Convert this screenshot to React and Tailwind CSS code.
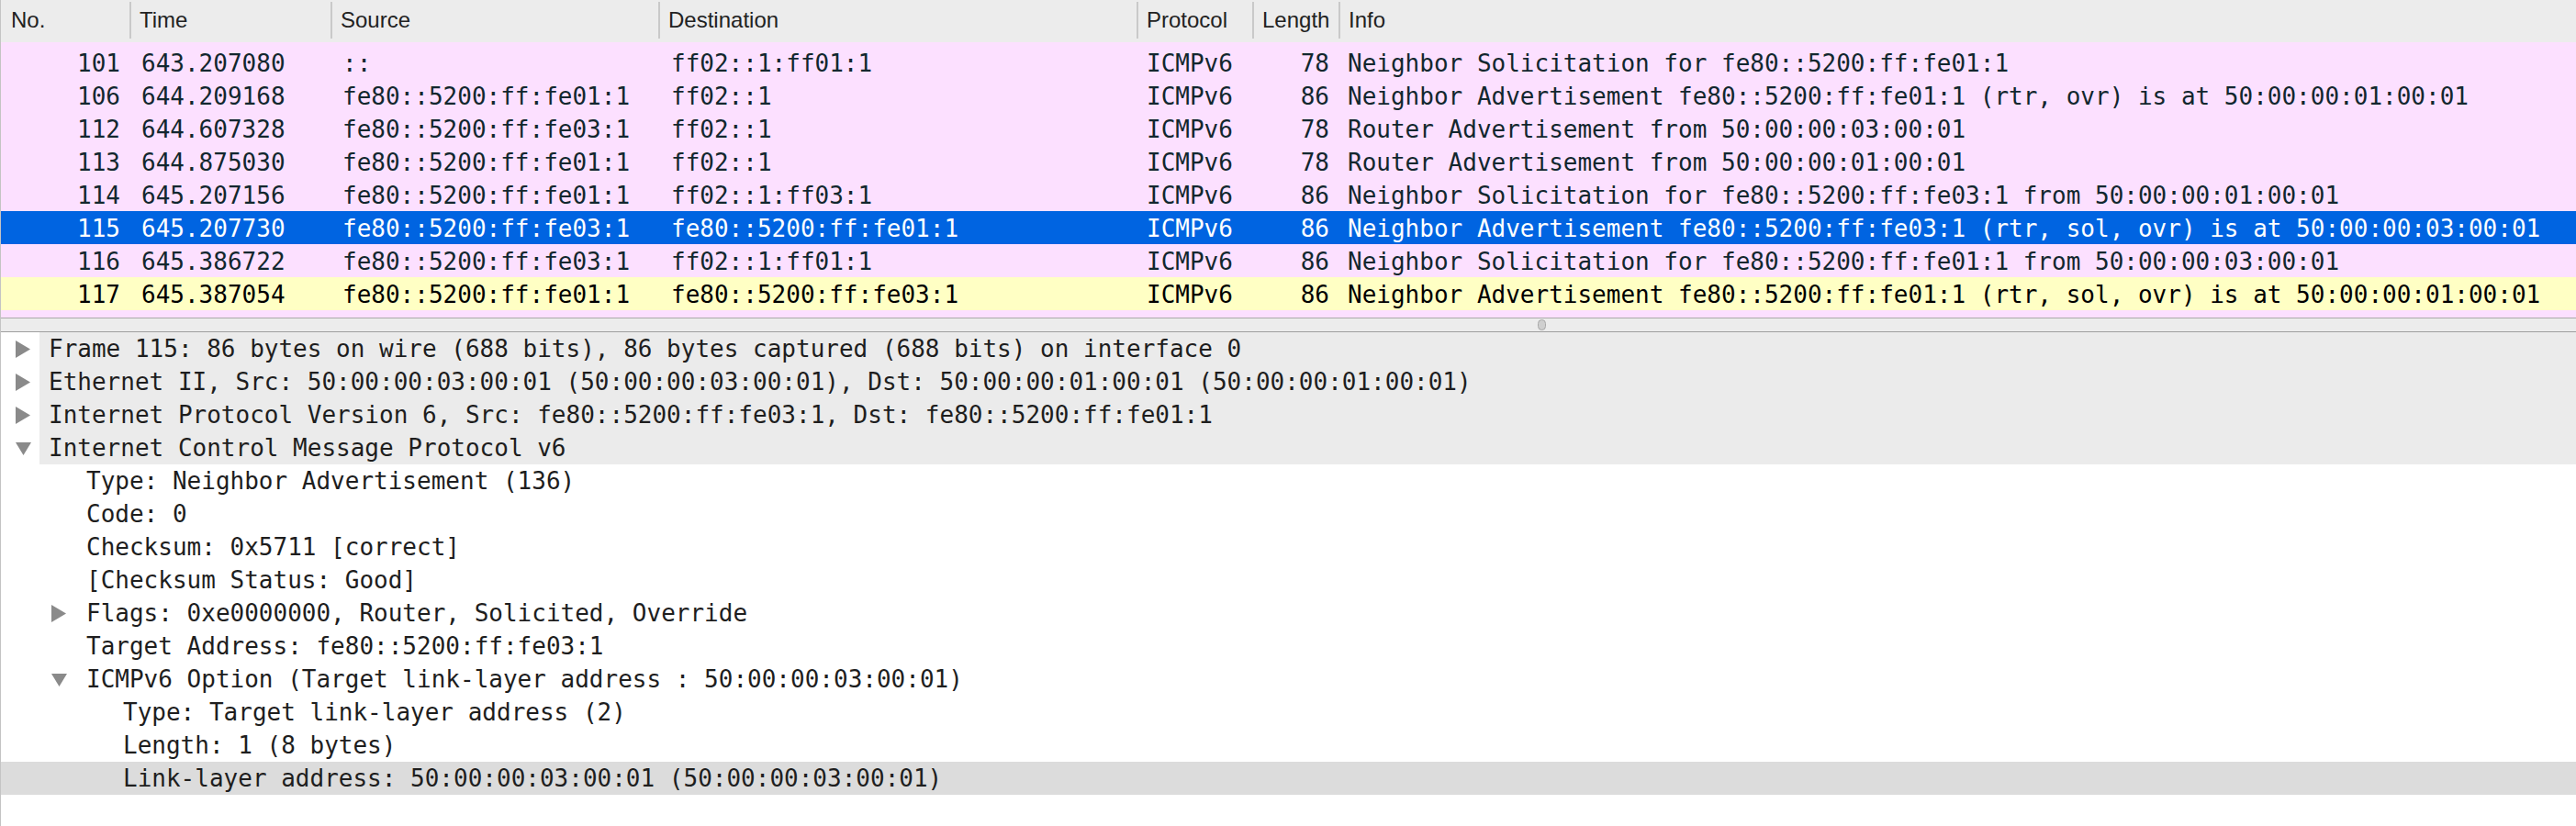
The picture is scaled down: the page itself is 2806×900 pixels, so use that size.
import React from 'react'

const mono = "font-['DejaVu_Sans_Mono','Liberation_Mono',monospace] text-[26px]"

const columns = [
  { label: 'No.', first: true },
  { label: 'Time' },
  { label: 'Source' },
  { label: 'Destination' },
  { label: 'Protocol' },
  { label: 'Length' },
  { label: 'Info' },
]

const gridCols = 'grid grid-cols-[140px_219px_357px_521px_126px_94px_1fr]'

const packets = [
  ['101', '643.207080', '::', 'ff02::1:ff01:1', 'ICMPv6', '78', 'Neighbor Solicitation for fe80::5200:ff:fe01:1'],
  ['106', '644.209168', 'fe80::5200:ff:fe01:1', 'ff02::1', 'ICMPv6', '86', 'Neighbor Advertisement fe80::5200:ff:fe01:1 (rtr, ovr) is at 50:00:00:01:00:01'],
  ['112', '644.607328', 'fe80::5200:ff:fe03:1', 'ff02::1', 'ICMPv6', '78', 'Router Advertisement from 50:00:00:03:00:01'],
  ['113', '644.875030', 'fe80::5200:ff:fe01:1', 'ff02::1', 'ICMPv6', '78', 'Router Advertisement from 50:00:00:01:00:01'],
  ['114', '645.207156', 'fe80::5200:ff:fe01:1', 'ff02::1:ff03:1', 'ICMPv6', '86', 'Neighbor Solicitation for fe80::5200:ff:fe03:1 from 50:00:00:01:00:01'],
  ['115', '645.207730', 'fe80::5200:ff:fe03:1', 'fe80::5200:ff:fe01:1', 'ICMPv6', '86', 'Neighbor Advertisement fe80::5200:ff:fe03:1 (rtr, sol, ovr) is at 50:00:00:03:00:01', 'selected'],
  ['116', '645.386722', 'fe80::5200:ff:fe03:1', 'ff02::1:ff01:1', 'ICMPv6', '86', 'Neighbor Solicitation for fe80::5200:ff:fe01:1 from 50:00:00:03:00:01'],
  ['117', '645.387054', 'fe80::5200:ff:fe01:1', 'fe80::5200:ff:fe03:1', 'ICMPv6', '86', 'Neighbor Advertisement fe80::5200:ff:fe01:1 (rtr, sol, ovr) is at 50:00:00:01:00:01', 'related'],
]

const details = [
  { level: 0, arrow: 'right', text: 'Frame 115: 86 bytes on wire (688 bits), 86 bytes captured (688 bits) on interface 0' },
  { level: 0, arrow: 'right', text: 'Ethernet II, Src: 50:00:00:03:00:01 (50:00:00:03:00:01), Dst: 50:00:00:01:00:01 (50:00:00:01:00:01)' },
  { level: 0, arrow: 'right', text: 'Internet Protocol Version 6, Src: fe80::5200:ff:fe03:1, Dst: fe80::5200:ff:fe01:1' },
  { level: 0, arrow: 'down', text: 'Internet Control Message Protocol v6' },
  { level: 1, text: 'Type: Neighbor Advertisement (136)' },
  { level: 1, text: 'Code: 0' },
  { level: 1, text: 'Checksum: 0x5711 [correct]' },
  { level: 1, text: '[Checksum Status: Good]' },
  { level: 1, arrow: 'right', text: 'Flags: 0xe0000000, Router, Solicited, Override' },
  { level: 1, text: 'Target Address: fe80::5200:ff:fe03:1' },
  { level: 1, arrow: 'down', text: 'ICMPv6 Option (Target link-layer address : 50:00:00:03:00:01)' },
  { level: 2, text: 'Type: Target link-layer address (2)' },
  { level: 2, text: 'Length: 1 (8 bytes)' },
  { level: 2, text: 'Link-layer address: 50:00:00:03:00:01 (50:00:00:03:00:01)', highlight: true },
]

const levelPad = { 1: 'pl-[55px]', 2: 'pl-[95px]' }

// disclosure triangles of the tree
const Arrow = ({ dir }) => {
  if (dir === 'down') {
    return (
      <svg width="17" height="15" viewBox="0 0 17 15" className="block">
        <polygon points="0,1 17,1 8.5,15" fill="#8a8a8a" />
      </svg>
    )
  }
  return (
    <svg width="16" height="19" viewBox="0 0 16 19" className="block">
      <polygon points="0,0 16,9.5 0,19" fill="#8a8a8a" />
    </svg>
  )
}

const PacketRow = ({ row }) => {
  const state = row[7]
  const rowClass =
    state === 'selected'
      ? 'bg-[#0064e1] text-white'
      : state === 'related'
        ? 'bg-[#ffffc4] text-black'
        : 'bg-[#fce0ff] text-[#12272e]'
  return (
    <div className={`${gridCols} h-[36px] items-center whitespace-pre ${rowClass}`}>
      <div className="text-right pr-[10px]">{row[0]}</div>
      <div className="pl-[13px] overflow-hidden">{row[1]}</div>
      <div className="pl-[13px] overflow-hidden">{row[2]}</div>
      <div className="pl-[14px] overflow-hidden">{row[3]}</div>
      <div className="pl-[11px] overflow-hidden">{row[4]}</div>
      <div className="text-right pr-[10px]">{row[5]}</div>
      <div className="pl-[10px] overflow-hidden">{row[6]}</div>
    </div>
  )
}

const DetailRow = ({ item }) => {
  if (item.level === 0) {
    return (
      <div className="flex h-[36px] items-center">
        <div className="w-[42px] h-full bg-white flex items-center pl-[16px]">
          <Arrow dir={item.arrow} />
        </div>
        <div className="flex-1 h-full bg-[#ebebeb] flex items-center pl-[10px] whitespace-pre">
          {item.text}
        </div>
      </div>
    )
  }
  return (
    <div className={`flex h-[36px] items-center whitespace-pre ${levelPad[item.level]} ${item.highlight ? 'bg-[#dcdcdc]' : ''}`}>
      <div className="w-[38px] flex items-center">
        {item.arrow && <Arrow dir={item.arrow} />}
      </div>
      <span>{item.text}</span>
    </div>
  )
}

export default function App() {
  return (
    <div className="w-[2806px] h-[900px] overflow-hidden bg-white border-l border-[#c4c4c4] flex flex-col">
      {/* packet list header */}
      <div className={`${gridCols} h-[46px] bg-[#ececec] text-[#222] font-['Liberation_Sans',Arial,sans-serif] text-[24px]`}>
        {columns.map((c) => (
          <div key={c.label} className="pt-[2px] overflow-hidden">
            <div className={`h-[40px] flex items-center whitespace-nowrap ${c.first ? 'pl-[11px]' : 'border-l-2 border-[#c9c9c9] pl-[9px]'}`}>
              {c.label}
            </div>
          </div>
        ))}
      </div>

      {/* packet list */}
      <div className={`bg-[#fce0ff] pt-[4px] pb-[8px] border-b border-[#a9a9a9] ${mono}`}>
        {packets.map((p) => (
          <PacketRow key={p[0]} row={p} />
        ))}
      </div>

      {/* splitter */}
      <div className="h-[15px] bg-[#ececec] border-b border-[#9f9f9f] flex items-center">
        <div className="ml-[1674px] w-[9px] h-[12px] rounded-full bg-[#cfcfcf] border border-[#a8a8a8]" />
      </div>

      {/* packet details */}
      <div className={`flex-1 bg-white text-[#1e1e1e] ${mono}`}>
        {details.map((d, i) => (
          <DetailRow key={i} item={d} />
        ))}
      </div>
    </div>
  )
}
